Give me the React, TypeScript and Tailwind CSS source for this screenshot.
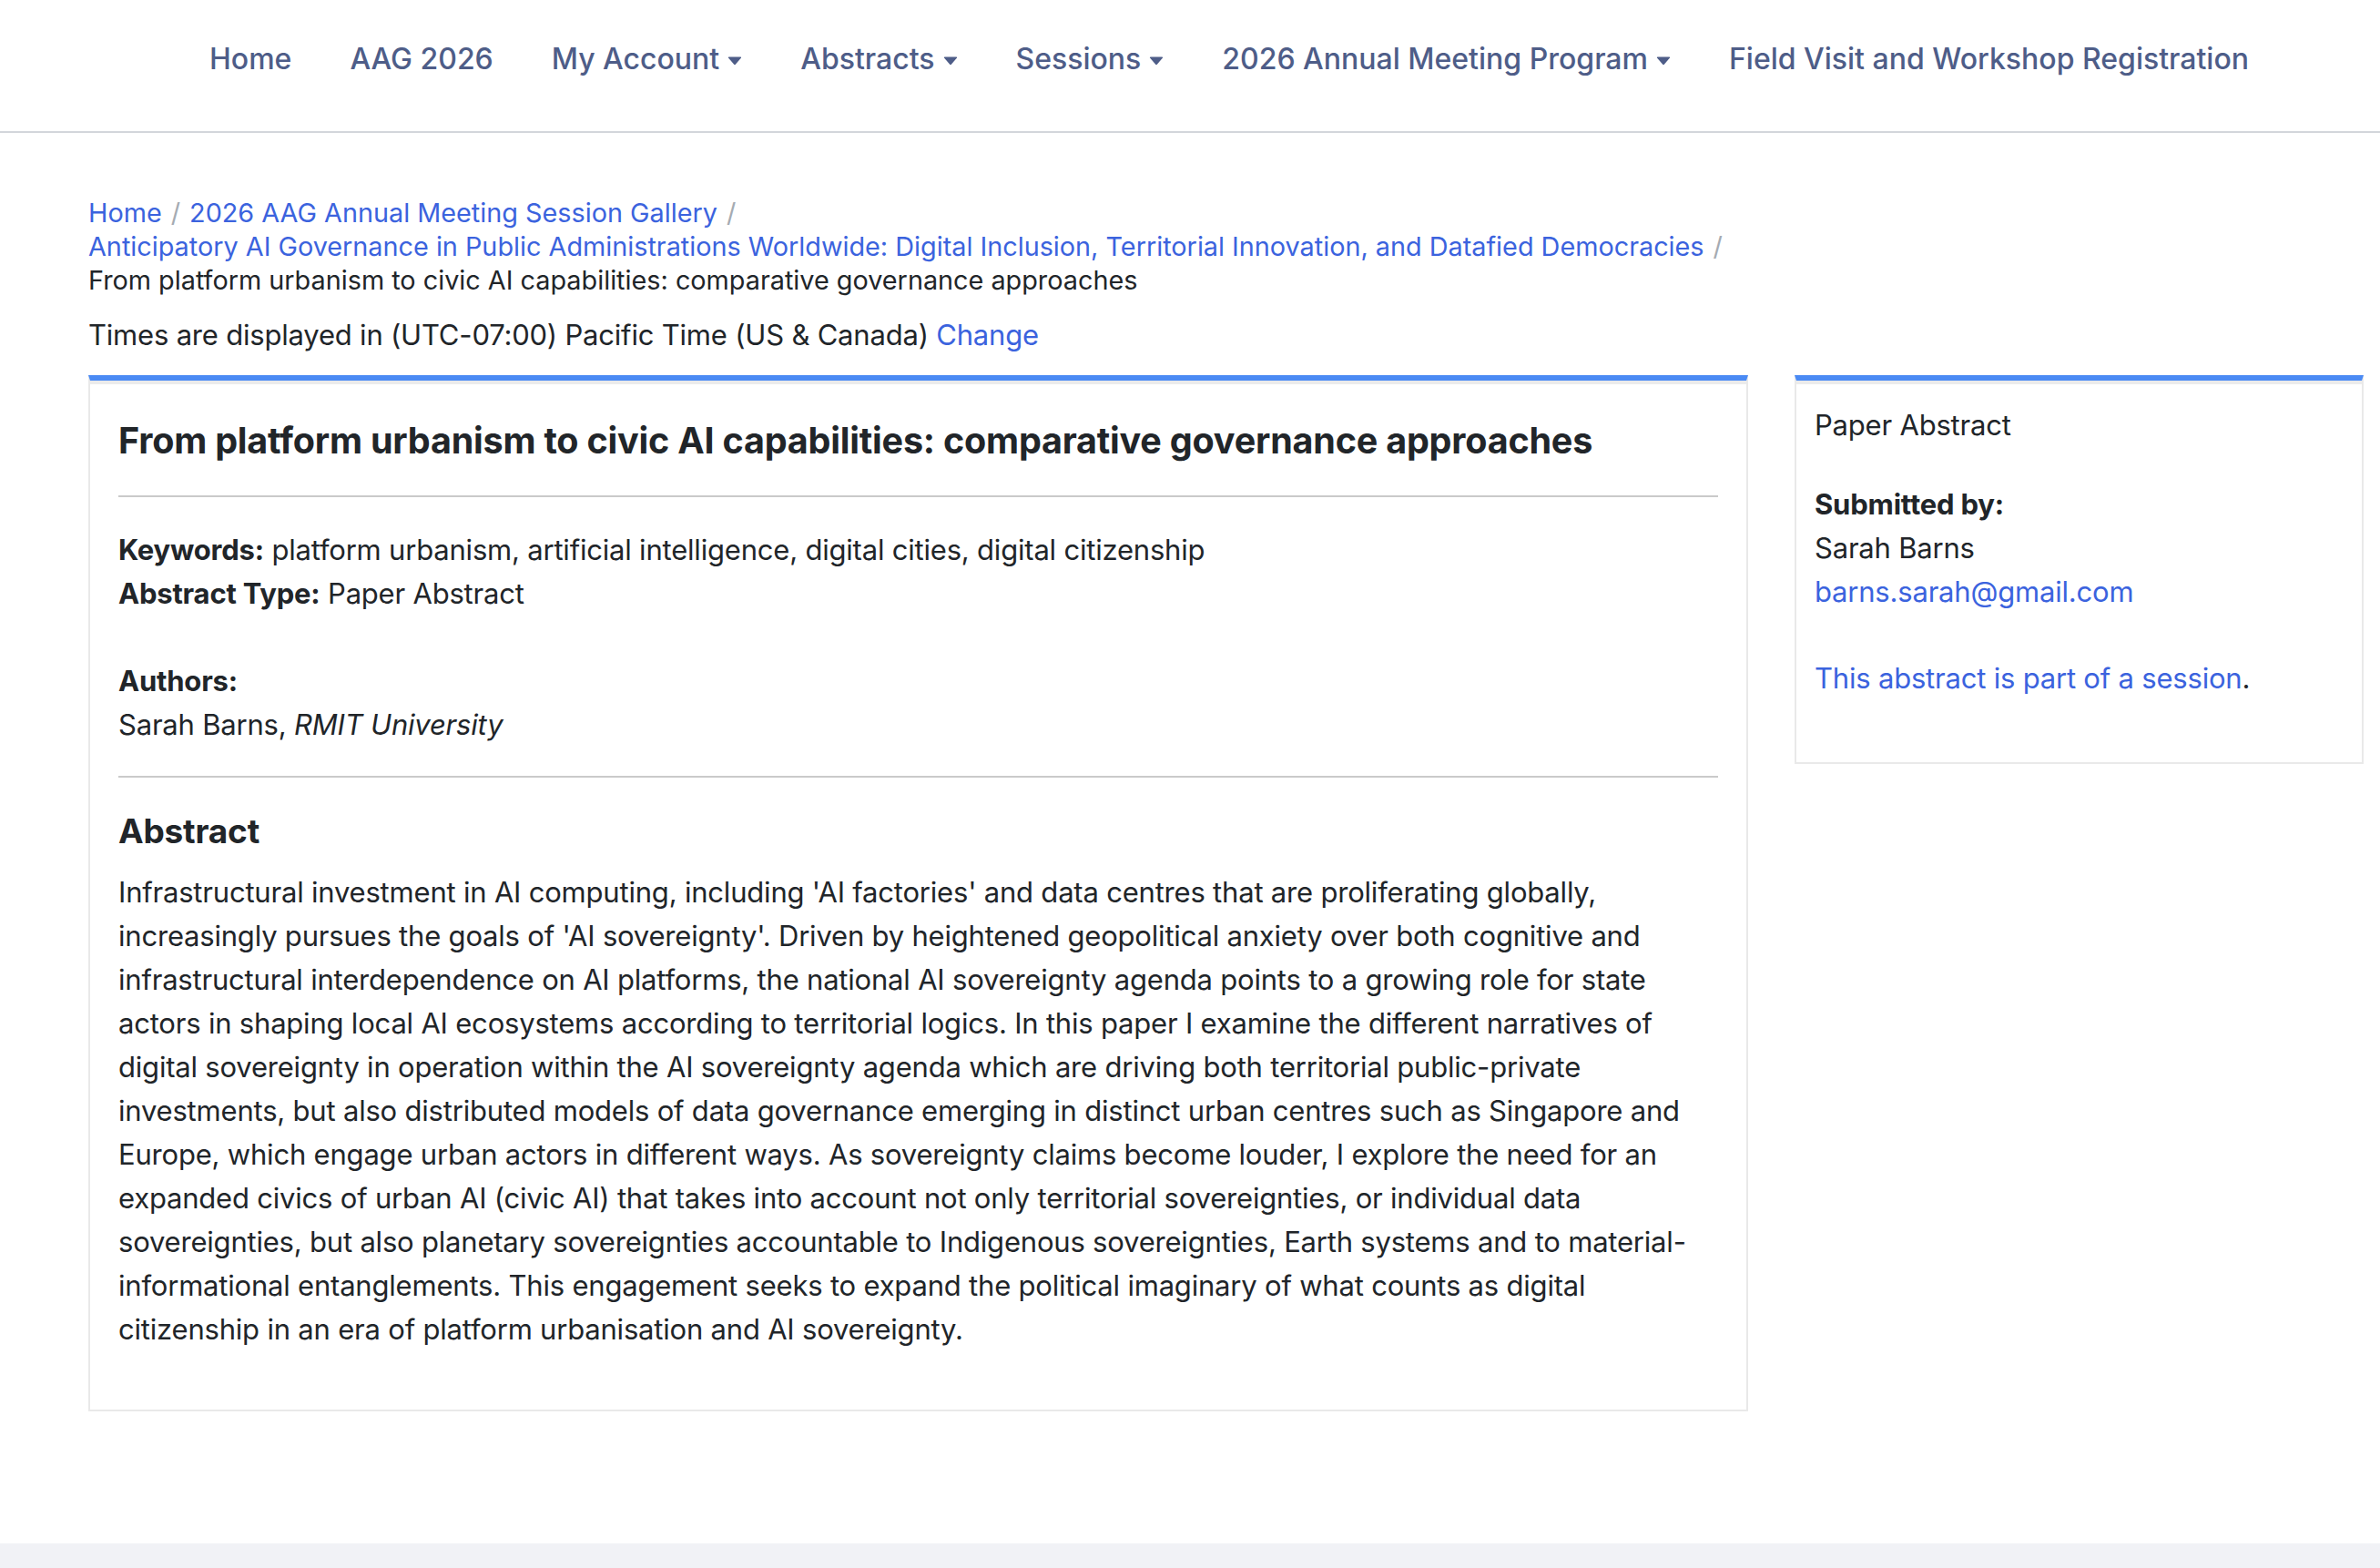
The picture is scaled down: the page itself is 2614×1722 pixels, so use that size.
import React from "react";

const navItems = [
  { label: "Home" },
  { label: "AAG 2026" },
  { label: "My Account", menu: true },
  { label: "Abstracts", menu: true },
  { label: "Sessions", menu: true },
  { label: "2026 Annual Meeting Program", menu: true },
  { label: "Field Visit and Workshop Registration" },
];

const abstractText =
  "Infrastructural investment in AI computing, including 'AI factories' and data centres that are proliferating globally, increasingly pursues the goals of 'AI sovereignty'. Driven by heightened geopolitical anxiety over both cognitive and infrastructural interdependence on AI platforms, the national AI sovereignty agenda points to a growing role for state actors in shaping local AI ecosystems according to territorial logics. In this paper I examine the different narratives of digital sovereignty in operation within the AI sovereignty agenda which are driving both territorial public-private investments, but also distributed models of data governance emerging in distinct urban centres such as Singapore and Europe, which engage urban actors in different ways. As sovereignty claims become louder, I explore the need for an expanded civics of urban AI (civic AI) that takes into account not only territorial sovereignties, or individual data sovereignties, but also planetary sovereignties accountable to Indigenous sovereignties, Earth systems and to material-informational entanglements. This engagement seeks to expand the political imaginary of what counts as digital citizenship in an era of platform urbanisation and AI sovereignty.";

const Caret = () => (
  <svg width="16" height="10" viewBox="0 0 16 10" className="ml-[9px] mt-[4px]">
    <path d="M1 1.5 Q0.5 0.5 1.8 0.5 H14.2 Q15.5 0.5 15 1.5 L8.8 8.8 Q8 9.6 7.2 8.8 Z" fill="currentColor" />
  </svg>
);

const Crumb = ({ children, last }: { children: React.ReactNode; last?: boolean }) => (
  <li className="flex items-center">
    {children}
    {!last && <span className="px-[10px] text-[#a5abb2]">/</span>}
  </li>
);

const App = () => {
  return (
    <div className="min-h-[1722px] flex flex-col bg-white text-[#212529] font-['Inter','Noto_Sans',sans-serif]">
      <nav className="h-[146px] shrink-0 border-b-2 border-[#d3d6db] flex items-center pl-[230px] pb-[14px] gap-[64px] text-[32px] font-medium text-[#4e5d88]">
        {navItems.map((item) => (
          <a key={item.label} className="flex items-center leading-none">
            {item.label}
            {item.menu && <Caret />}
          </a>
        ))}
      </nav>

      <main className="flex-1 pl-[97px] pr-[18px] pt-[69px]">
        <ol className="flex flex-wrap text-[28.8px] leading-[37px]">
          <Crumb>
            <a className="text-[#3b63de]">Home</a>
          </Crumb>
          <Crumb>
            <a className="text-[#3b63de]">2026 AAG Annual Meeting Session Gallery</a>
          </Crumb>
          <Crumb>
            <a className="text-[#3b63de]">
              Anticipatory AI Governance in Public Administrations Worldwide: Digital Inclusion, Territorial Innovation, and Datafied Democracies
            </a>
          </Crumb>
          <Crumb last>
            <span>From platform urbanism to civic AI capabilities: comparative governance approaches</span>
          </Crumb>
        </ol>

        <p className="mt-[18px] text-[31px] tracking-[-0.2px] leading-[48px]">
          Times are displayed in (UTC-07:00) Pacific Time (US &amp; Canada) <a className="text-[#3b63de]">Change</a>
        </p>

        <div className="mt-[20px] flex items-start gap-[51px]">
          <section className="w-[1823px] border-2 border-[#e9e9e9] border-t-[6px] border-t-[#4a8af4]">
            <div className="h-[4px] bg-[#ebebeb]" />
            <div className="px-[31px] pt-[38px] pb-[64px] text-[31px] tracking-[-0.2px] leading-[48px]">
              <h1 className="text-[39.5px] leading-[48px] font-bold tracking-[-0.2px]">
                From platform urbanism to civic AI capabilities: comparative governance approaches
              </h1>
              <hr className="mt-[36px] mb-[34px] border-t-2 border-[#cacaca]" />
              <p>
                <span className="font-bold">Keywords:</span> platform urbanism, artificial intelligence, digital cities, digital citizenship
              </p>
              <p>
                <span className="font-bold">Abstract Type:</span> Paper Abstract
              </p>
              <p className="mt-[48px] font-bold">Authors:</p>
              <p>
                Sarah Barns, <em>RMIT University</em>
              </p>
              <hr className="mt-[32px] border-t-2 border-[#cacaca]" />
              <h2 className="mt-[36px] text-[37px] leading-[46px] font-bold">Abstract</h2>
              <p className="mt-[20px]">{abstractText}</p>
            </div>
          </section>

          <aside className="w-[625px] border-2 border-[#e9e9e9] border-t-[6px] border-t-[#4a8af4]">
            <div className="h-[4px] bg-[#ebebeb]" />
            <div className="px-[20px] pt-[21px] pb-[68px] text-[31px] tracking-[-0.2px] leading-[48px]">
              <p>Paper Abstract</p>
              <p className="mt-[39px] font-bold">Submitted by:</p>
              <p>Sarah Barns</p>
              <a className="block text-[#3b63de]">barns.sarah@gmail.com</a>
              <p className="mt-[47px]">
                <a className="text-[#3b63de]">This abstract is part of a session</a>.
              </p>
            </div>
          </aside>
        </div>
      </main>

      <footer className="h-[27px] shrink-0 bg-[#f1f2f6]" />
    </div>
  );
};

export default App;
